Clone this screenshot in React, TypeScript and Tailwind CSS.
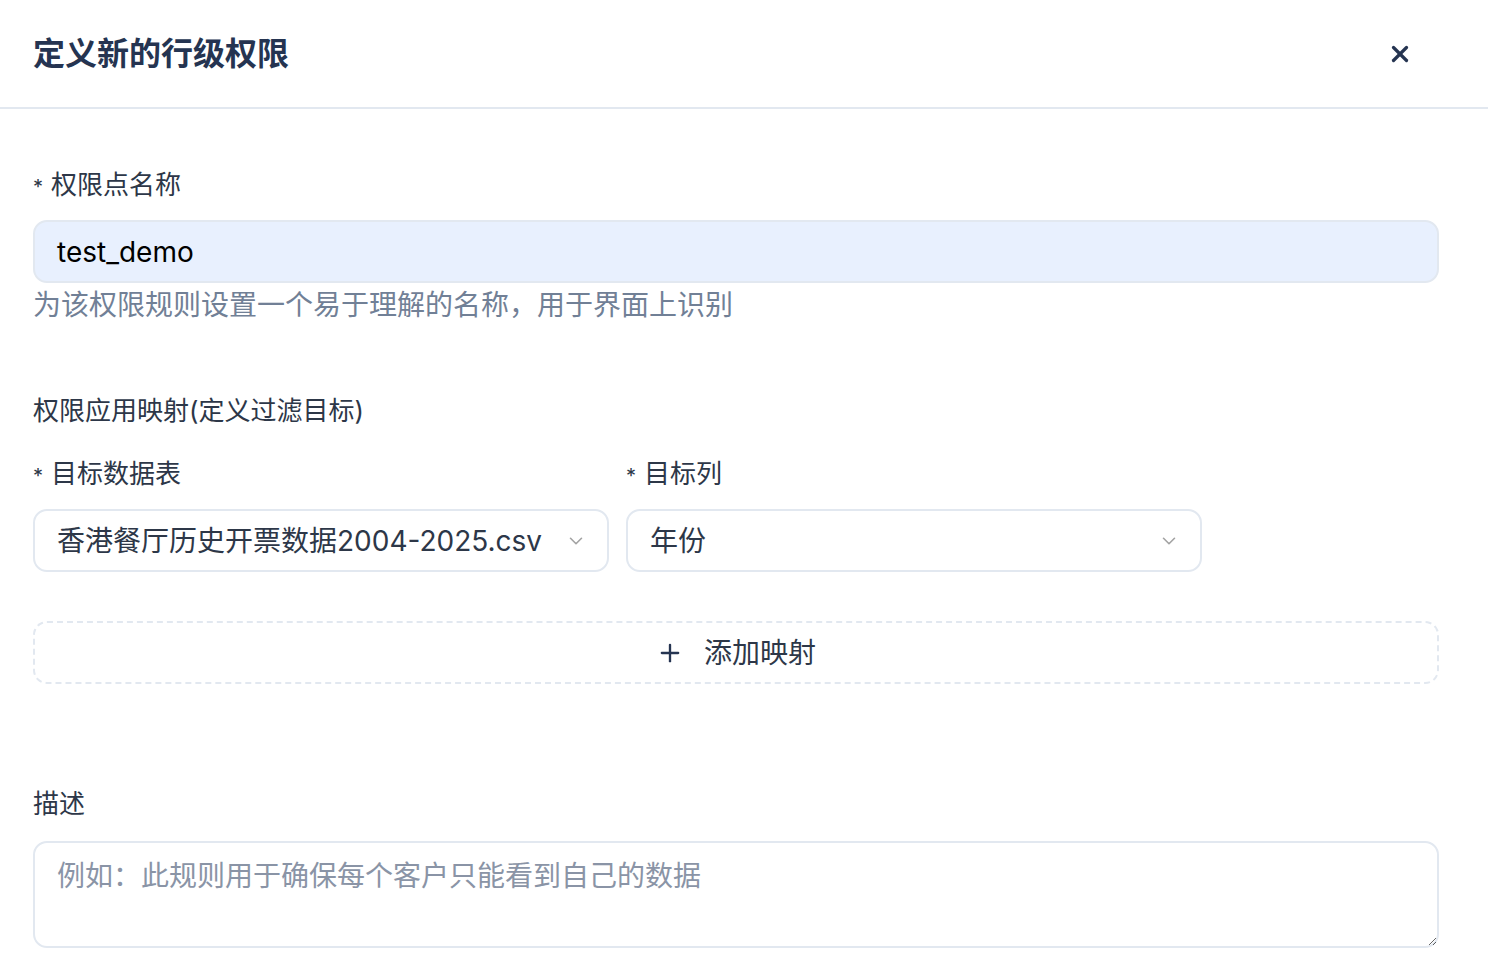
import { X, Plus, ChevronDown } from "lucide-react";

const font = {
  fontFamily: 'Inter, "Noto Sans CJK SC", "Noto Sans", sans-serif',
};

const Label = ({ children, required }: { children: React.ReactNode; required?: boolean }) => (
  <div className="flex items-center h-8 text-[26px] text-[#2d3748]">
    {required && <span className="mr-2 text-[20px] leading-none mt-1.5">*</span>}
    <span>{children}</span>
  </div>
);

const Select = ({ value }: { value: string }) => (
  <div className="flex items-center justify-between w-[576px] h-[63px] pl-[22px] pr-5 rounded-[14px] border-2 border-[#e2e8f0] bg-white">
    <span className="text-[28px] text-[#2d3748] truncate">{value}</span>
    <ChevronDown className="shrink-0 ml-4 text-[#a3a3a3]" size={22} strokeWidth={1.75} />
  </div>
);

export default function App() {
  return (
    <div className="w-[1488px] h-[976px] bg-white overflow-hidden" style={font}>
      {/* header */}
      <div className="flex items-center justify-between h-[109px] pl-[33px] pr-[75px] border-b-2 border-[#e2e8f0]">
        <h2 className="text-[32px] font-bold text-[#253451]">定义新的行级权限</h2>
        <X className="text-[#253451]" size={26} strokeWidth={3} />
      </div>

      <div className="pl-[33px] pr-[49px] pt-[59px]">
        {/* name */}
        <Label required>权限点名称</Label>
        <div className="mt-5 h-[63px] flex items-center pl-[22px] rounded-[14px] border-2 border-[#e2e8f0] bg-[#e8f0fe] text-[28px] text-black">
          test_demo
        </div>
        <p className="mt-1 text-[28px] leading-9 text-[#718096]">为该权限规则设置一个易于理解的名称，用于界面上识别</p>

        {/* mapping */}
        <div className="mt-[71px]">
          <Label>权限应用映射(定义过滤目标)</Label>
        </div>
        <div className="mt-[31px] flex gap-[17px]">
          <div>
            <Label required>目标数据表</Label>
            <div className="mt-[20px]">
              <Select value="香港餐厅历史开票数据2004-2025.csv" />
            </div>
          </div>
          <div>
            <Label required>目标列</Label>
            <div className="mt-[20px]">
              <Select value="年份" />
            </div>
          </div>
        </div>

        <button className="mt-[49px] w-full h-[63px] flex items-center justify-center gap-5 rounded-[14px] border-2 border-dashed border-[#e2e8f0] text-[28px] text-[#2d3748]">
          <Plus size={28} strokeWidth={2} className="text-[#253451]" />
          <span>添加映射</span>
        </button>

        {/* description */}
        <div className="mt-[103px]">
          <Label>描述</Label>
        </div>
        <textarea
          className="mt-[22px] block w-full h-[107px] pl-[22px] pr-6 py-3 rounded-[14px] border-2 border-[#e2e8f0] text-[28px] text-[#2d3748] placeholder:text-[#8a94a6] outline-none"
          placeholder="例如：此规则用于确保每个客户只能看到自己的数据"
        />
      </div>
    </div>
  );
}
